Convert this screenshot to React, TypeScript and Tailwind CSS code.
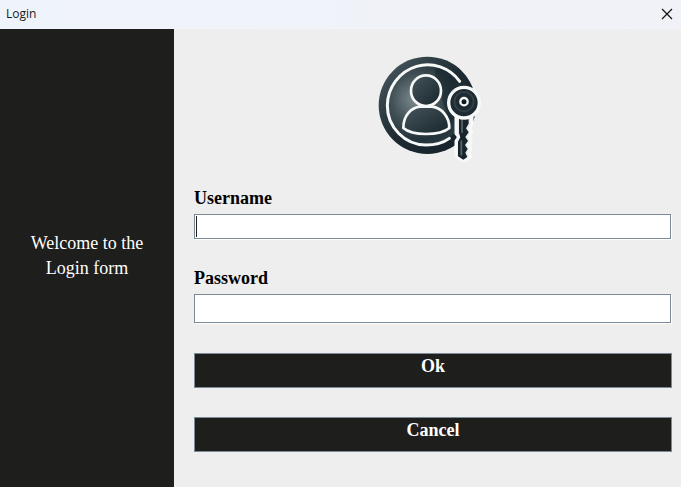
import React from "react";

function LoginIcon() {
  return (
    <svg
      className="h-[109px] w-[110px]"
      viewBox="9 27 330 327"
      fill="none"
      strokeLinecap="round"
      strokeLinejoin="round"
      role="img"
      aria-label="User with key"
    >
      <defs>
        <radialGradient id="disc" cx="36%" cy="42%" r="64%">
          <stop offset="0" stopColor="#7c8c90" />
          <stop offset="0.45" stopColor="#435257" />
          <stop offset="0.8" stopColor="#24333a" />
          <stop offset="1" stopColor="#2a3a41" />
        </radialGradient>
        <linearGradient id="rim" x1="0" y1="0" x2="1" y2="1">
          <stop offset="0" stopColor="#4d5e64" />
          <stop offset="0.5" stopColor="#1d2a31" />
          <stop offset="1" stopColor="#142129" />
        </linearGradient>
        <linearGradient id="person" x1="0" y1="0" x2="1" y2="1">
          <stop offset="0" stopColor="#46565c" />
          <stop offset="1" stopColor="#17242b" />
        </linearGradient>
      </defs>
      <circle cx="172" cy="181" r="146" fill="url(#rim)" />
      <circle cx="168" cy="181" r="120" fill="url(#disc)" />
      <path d="M196 98 Q222 118 216 166 L240 230 L282 200 Q284 150 264 112 Q235 76 196 62Z" fill="#17242b" opacity="0.55" />
      <path
        d="M269 109 C239 68 187 50 140 64 C88 79 52 128 52 182 C52 247 105 300 168 300 C195 300 219 294 238 280"
        stroke="#f7f9f9"
        strokeWidth="9"
      />
      <path
        d="M100 249 C100 210 126 187 150 185 H186 C214 188 238 214 238 249 C222 263 196 267 168 267 C139 267 116 263 100 249Z"
        fill="url(#person)"
        stroke="#f7f9f9"
        strokeWidth="8"
      />
      <ellipse cx="168" cy="137" rx="45" ry="46" fill="url(#person)" stroke="#f7f9f9" strokeWidth="8" />
      <path
        d="M258 212 L258 266 L266 276 L258 288 L258 334 L274 346 H288 L302 334 L297 322 L303 312 L297 300 L304 289 L298 276 L305 263 L299 250 L306 238 V212Z"
        fill="#e9edee"
        stroke="#f7f9f9"
        strokeWidth="9"
      />
      <path
        d="M267 218 H296 V236 L288 250 L296 262 L286 276 L294 288 L285 300 L293 312 L286 323 L292 336 L280 344 L264 334 V290 L271 277 L267 264Z"
        fill="#18242b"
      />
      <path d="M276 222 V262 M274 288 V330" stroke="#59676c" strokeWidth="5" />
      <circle cx="282" cy="173" r="46" fill="#1e2b32" stroke="#f7f9f9" strokeWidth="10" />
      <circle cx="282" cy="170" r="29" stroke="#35444a" strokeWidth="5" />
      <circle cx="282" cy="170" r="11" fill="#101a1f" stroke="#f7f9f9" strokeWidth="7" />
    </svg>
  );
}

const fieldClass =
  "block w-full border border-[#7a8a99] bg-white px-1 text-[18px] text-black shadow-[1px_1px_0_#ffffff] outline-none";
const labelClass = "mb-1 block text-[18px] leading-6 font-bold text-black";
const buttonClass =
  "flex w-full h-[35px] items-start justify-center border border-[#7a8a99] bg-[#1e1e1c] text-[18px] leading-6 font-bold text-white";

export default function App() {
  return (
    <div className="flex min-h-screen flex-col bg-[#eeeeee] font-['Liberation_Serif',serif]">
      <header className="flex h-[29px] items-center justify-between bg-linear-to-r from-[#eff3fb] to-[#f1f2f7] pr-2 pb-[2px] pl-[6px]">
        <h1 className="font-['Open_Sans',sans-serif] text-[12px] leading-4 text-[#1a1a1a]">Login</h1>
        <button type="button" aria-label="Close" className="flex size-3 items-center justify-center">
          <svg className="size-[12px]" viewBox="0 0 12 12" stroke="#111111" strokeWidth="1.2">
            <path d="M1 1 L11 11 M11 1 L1 11" />
          </svg>
        </button>
      </header>
      <div className="flex flex-1">
        <aside className="flex w-[174px] shrink-0 items-center justify-center bg-[#1e1e1c] px-5 pb-1">
          <p className="text-center text-[18px] leading-[25px] text-white">
            Welcome to the
            <br />
            Login form
          </p>
        </aside>
        <main className="min-w-0 flex-1 pt-[25px] pb-6">
          <div className="flex justify-center">
            <LoginIcon />
          </div>
          <form className="pt-[23px] pr-[9px] pl-5" onSubmit={(e) => e.preventDefault()}>
            <label htmlFor="username" className={labelClass}>
              Username
            </label>
            <div className="relative mr-px">
              <input id="username" type="text" className={`${fieldClass} h-[25px]`} />
              <span aria-hidden="true" className="absolute inset-y-[2px] left-[2px] w-px bg-[#222222]" />
            </div>
            <div className="mt-[27px] mr-px">
              <label htmlFor="password" className={labelClass}>
                Password
              </label>
              <input id="password" type="password" className={`${fieldClass} h-[29px]`} />
            </div>
            <div className="mt-[30px] flex flex-col gap-[29px]">
              <button type="submit" className={buttonClass}>
                Ok
              </button>
              <button type="button" className={buttonClass}>
                Cancel
              </button>
            </div>
          </form>
        </main>
      </div>
    </div>
  );
}
